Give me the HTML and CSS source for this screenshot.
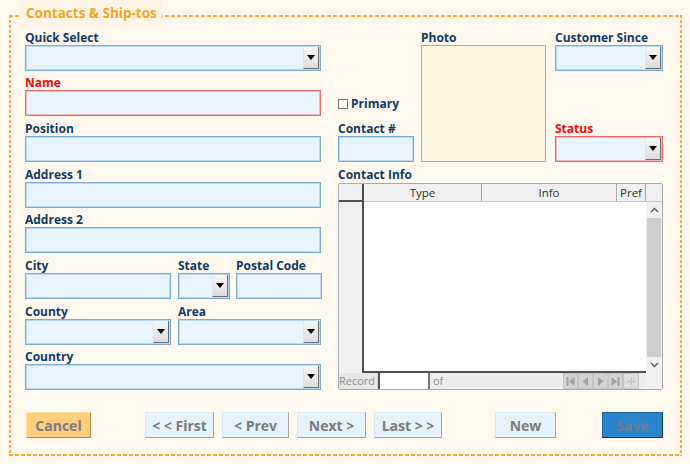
FILE: index.html
```html
<!DOCTYPE html>
<html lang="en">
<head>
<meta charset="utf-8">
<title>Contacts &amp; Ship-tos</title>
<link rel="stylesheet" href="styles.css">
</head>
<body>
<div class="frame">
  <div class="legend">Contacts &amp; Ship-tos</div>
  <div class="form">
    <div class="field r1 cl">
      <div class="lbl">Quick Select</div>
      <div class="box combo"><span class="drop"></span></div>
    </div>
    <div class="field r2 cl">
      <div class="lbl req">Name</div>
      <div class="box req"></div>
    </div>
    <div class="field r3 cl">
      <div class="lbl">Position</div>
      <div class="box"></div>
    </div>
    <div class="field r4 cl">
      <div class="lbl">Address 1</div>
      <div class="box"></div>
    </div>
    <div class="field r5 cl">
      <div class="lbl">Address 2</div>
      <div class="box"></div>
    </div>
    <div class="r6 cl split3">
      <div class="field">
        <div class="lbl">City</div>
        <div class="box"></div>
      </div>
      <div class="field">
        <div class="lbl">State</div>
        <div class="box combo"><span class="drop"></span></div>
      </div>
      <div class="field">
        <div class="lbl">Postal Code</div>
        <div class="box"></div>
      </div>
    </div>
    <div class="r7 cl split2">
      <div class="field">
        <div class="lbl">County</div>
        <div class="box combo"><span class="drop"></span></div>
      </div>
      <div class="field">
        <div class="lbl">Area</div>
        <div class="box combo"><span class="drop"></span></div>
      </div>
    </div>
    <div class="field r8 cl">
      <div class="lbl">Country</div>
      <div class="box combo"><span class="drop"></span></div>
    </div>

    <div class="primary r2 cm"><span class="check"></span><span class="lbl">Primary</span></div>
    <div class="field r3 cm">
      <div class="lbl">Contact #</div>
      <div class="box"></div>
    </div>

    <div class="field top photo cp">
      <div class="lbl">Photo</div>
      <div class="photo-box"></div>
    </div>

    <div class="field r1 cr">
      <div class="lbl">Customer Since</div>
      <div class="box combo"><span class="drop"></span></div>
    </div>
    <div class="field r3 cr">
      <div class="lbl req">Status</div>
      <div class="box req combo"><span class="drop"></span></div>
    </div>

    <div class="field top contact">
      <div class="lbl">Contact Info</div>
      <div class="cgrid">
        <div class="cg-corner"></div>
        <div class="cg-h">Type</div>
        <div class="cg-h">Info</div>
        <div class="cg-h">Pref</div>
        <div class="cg-h cg-hs"></div>
        <div class="cg-selcol"></div>
        <div class="cg-rows"></div>
        <div class="cg-scroll">
          <span class="sc-btn"><svg width="9" height="6" viewBox="0 0 9 6"><polyline points="1,5 4.5,1.5 8,5" fill="none" stroke="#555" stroke-width="1.3"/></svg></span>
          <span class="sc-track"><span class="sc-thumb"></span></span>
          <span class="sc-btn"><svg width="9" height="6" viewBox="0 0 9 6"><polyline points="1,1 4.5,4.5 8,1" fill="none" stroke="#555" stroke-width="1.3"/></svg></span>
        </div>
        <div class="cg-nav">
          <span class="nav-rec">Record</span>
          <span class="nav-input"></span>
          <span class="nav-of">of</span>
          <span class="nav-btns">
            <span class="nb"><svg width="11" height="11" viewBox="0 0 11 11"><rect x="1.5" y="1" width="2" height="9" fill="#a2a2a2"/><polygon points="9.5,1 4,5.5 9.5,10" fill="#a2a2a2"/></svg></span>
            <span class="nb"><svg width="11" height="11" viewBox="0 0 11 11"><polygon points="8,1 2.5,5.5 8,10" fill="#a2a2a2"/></svg></span>
            <span class="nb"><svg width="11" height="11" viewBox="0 0 11 11"><polygon points="3,1 8.5,5.5 3,10" fill="#a2a2a2"/></svg></span>
            <span class="nb"><svg width="11" height="11" viewBox="0 0 11 11"><polygon points="1.5,1 7,5.5 1.5,10" fill="#a2a2a2"/><rect x="7.5" y="1" width="2" height="9" fill="#a2a2a2"/></svg></span>
            <span class="nb nb-new"><svg width="11" height="11" viewBox="0 0 11 11"><path d="M5.5 1.5v8M1.5 5.5h8" stroke="#c4c4c4" stroke-width="1.3"/></svg></span>
          </span>
        </div>
        <div class="cg-navend"></div>
      </div>
    </div>
  </div>

  <div class="buttons">
    <button class="btn cancel">Cancel</button>
    <div class="nav-group">
      <button class="btn b-first">&lt; &lt; First</button>
      <button class="btn b-prev">&lt; Prev</button>
      <button class="btn b-next">Next &gt;</button>
      <button class="btn b-last">Last &gt; &gt;</button>
    </div>
    <button class="btn b-new">New</button>
    <button class="btn save">Save</button>
  </div>
</div>
</body>
</html>
```

FILE: styles.css
```css
html, body {
  margin: 0;
  padding: 0;
  background: #fef8ef;
}
body {
  font-family: "Open Sans", "Noto Sans", sans-serif;
  width: 690px;
  height: 464px;
  overflow: hidden;
}

.frame {
  position: relative;
  box-sizing: border-box;
  margin: 15px 0 0 9px;
  width: 673px;
  height: 441px;
  padding: 10px 0 0 16px;
  background:
    repeating-linear-gradient(90deg, #f8a73b 0 4px, transparent 4px 6px) left top / 100% 2px no-repeat,
    repeating-linear-gradient(90deg, #f8a73b 0 4px, transparent 4px 6px) left bottom / 100% 2px no-repeat,
    repeating-linear-gradient(180deg, #f8a73b 0 3px, transparent 3px 5px) left top / 2px 100% no-repeat,
    repeating-linear-gradient(180deg, #f8a73b 0 3px, transparent 3px 5px) right top / 2px 100% no-repeat;
}

.legend {
  position: absolute;
  left: 11px;
  top: -15px;
  width: 142px;
  box-sizing: border-box;
  height: 27px;
  line-height: 27px;
  padding: 0 0 0 6px;
  background: #fdf4e6;
  color: #f8a320;
  font-weight: 700;
  font-size: 13.5px;
  white-space: nowrap;
}

.form {
  display: grid;
  grid-template-columns: 296px 17px 76px 7px 125px 9px 108px;
  grid-template-rows: 46px 45px 46px 46px 45px 46px 46px 45px;
}

.r1 { grid-row: 1; }
.r2 { grid-row: 2; }
.r3 { grid-row: 3; }
.r4 { grid-row: 4; }
.r5 { grid-row: 5; }
.r6 { grid-row: 6; }
.r7 { grid-row: 7; }
.r8 { grid-row: 8; }
.cl { grid-column: 1; }
.cm { grid-column: 3; }
.cp { grid-column: 5; }
.cr { grid-column: 7; }
.photo { grid-row: 1 / 4; }
.contact { grid-row: 4 / 9; grid-column: 3 / 8; }

.field {
  display: flex;
  flex-direction: column;
  justify-content: flex-end;
  min-width: 0;
}
.field.top {
  justify-content: flex-start;
  padding-top: 6px;
}

.lbl {
  font-size: 12px;
  font-weight: 700;
  line-height: 14px;
  color: #113a64;
  white-space: nowrap;
}
.lbl.req { color: #f5080b; }

.box {
  box-sizing: border-box;
  height: 26px;
  border: 1px solid #78acd9;
  box-shadow: inset 0 0 0 1px #b9d8f2;
  background: #e8f4fe;
}
.box.req {
  border-color: #f06767;
  box-shadow: inset 0 0 0 1px #f7b6b8;
}
.combo {
  display: flex;
  justify-content: flex-end;
  padding: 1px;
}
.drop {
  box-sizing: border-box;
  width: 16px;
  height: 100%;
  background: linear-gradient(#f7f7f7, #dcdcdc);
  border-right: 1px solid #6d6d6d;
  border-bottom: 1px solid #6d6d6d;
  border-left: 1px solid #e6e6e6;
  display: flex;
  align-items: center;
  justify-content: center;
}
.drop::after {
  content: "";
  width: 0;
  height: 0;
  border-left: 4px solid transparent;
  border-right: 4px solid transparent;
  border-top: 5px solid #000;
}

.split3 {
  display: grid;
  grid-template-columns: 146px 52px 85px;
  column-gap: 7px;
}
.split3 > .field:nth-child(3) { margin-left: -1px; }
.split2 {
  display: grid;
  grid-template-columns: 146px 143px;
  column-gap: 7px;
}

.primary {
  align-self: end;
  margin-bottom: 5px;
  display: flex;
  align-items: center;
  gap: 3px;
  height: 14px;
}
.check {
  box-sizing: border-box;
  width: 10px;
  height: 10px;
  border: 1px solid #787878;
  background: #fdfdfd;
}

.photo-box {
  flex: 1;
  box-sizing: border-box;
  border: 1px solid #8ab6de;
  background: #fdf3e2;
}

/* contact grid */
.cgrid {
  flex: 1;
  margin-top: 1px;
  box-sizing: border-box;
  border: 1px solid #ababab;
  border-radius: 2px;
  overflow: hidden;
  display: grid;
  grid-template-columns: 25px 118px 135px 29px 16px;
  grid-template-rows: 18px 1fr 16px;
  font-size: 11px;
  color: #333;
  background: #f0f0f0;
}
.cg-corner {
  background: #f0f0f0;
  border-right: 2px solid #4f4f4f;
  border-bottom: 2px solid #4f4f4f;
}
.cg-h {
  background: #f0f0f0;
  border-right: 1px solid #a9a9a9;
  border-bottom: 1px solid #c9c9c9;
  text-align: center;
  line-height: 17px;
  font-size: 11.5px;
  white-space: nowrap;
}
.cg-hs { border-right: none; }
.cg-selcol {
  background: #f0f0f0;
  border-right: 2px solid #4f4f4f;
}
.cg-rows {
  grid-column: 2 / 5;
  background: #fff;
  border-bottom: 2px solid #4f4f4f;
}
.cg-scroll {
  display: flex;
  flex-direction: column;
  background: #f0f0f0;
}
.sc-btn {
  height: 16px;
  display: flex;
  align-items: center;
  justify-content: center;
}
.sc-track {
  flex: 1;
  display: flex;
  padding: 0 1px;
}
.sc-thumb {
  flex: 1;
  background: #cdcdcd;
}
.cg-nav {
  grid-column: 1 / 5;
  display: flex;
  align-items: stretch;
  background: #ececec;
  color: #8e8e8e;
  line-height: 15px;
}
.nav-rec {
  width: 38px;
  background: #e7e7e7;
  border-right: 1px solid #d2d2d2;
  white-space: nowrap;
}
.nav-input {
  box-sizing: border-box;
  width: 52px;
  background: #fff;
  border-left: 2px solid #555;
  border-right: 2px solid #777;
}
.nav-of {
  flex: 1;
  padding-left: 3px;
}
.nav-btns {
  display: flex;
  margin-right: 7px;
}
.nb {
  box-sizing: border-box;
  width: 15px;
  background: #d4d4d4;
  border: 1px solid #c4c4c4;
  display: flex;
  align-items: center;
  justify-content: center;
}
.nb-new {
  background: #dedede;
  width: 16px;
}
.cg-navend { background: #f0f0f0; }

/* buttons */
.buttons {
  display: flex;
  margin-top: 22px;
}
.nav-group {
  display: flex;
  gap: 8px;
  margin-left: 54px;
}
.btn {
  box-sizing: border-box;
  height: 26px;
  padding: 0;
  margin: 0;
  font-family: "Open Sans", "Noto Sans", sans-serif;
  font-size: 14px;
  font-weight: 700;
  color: #7b7b7b;
  background: #e6f3fd;
  border: 1px solid;
  border-color: #d8e7f4 #a4a4a4 #a4a4a4 #d8e7f4;
  border-radius: 0;
  white-space: nowrap;
}
.cancel {
  width: 65px;
  margin-left: 1px;
  background: #fecd7f;
  border-color: #fde0b2 #bf8f3e #bf8f3e #fde0b2;
}
.b-first { width: 69px; }
.b-prev { width: 67px; }
.b-next { width: 69px; }
.b-last { width: 68px; }
.b-new {
  width: 61px;
  margin-left: 53px;
}
.save {
  width: 61px;
  margin-left: 46px;
  background: #2a83cd;
  color: #6b7e90;
  border-color: #245f9c #0c376c #0c376c #245f9c;
}
```
